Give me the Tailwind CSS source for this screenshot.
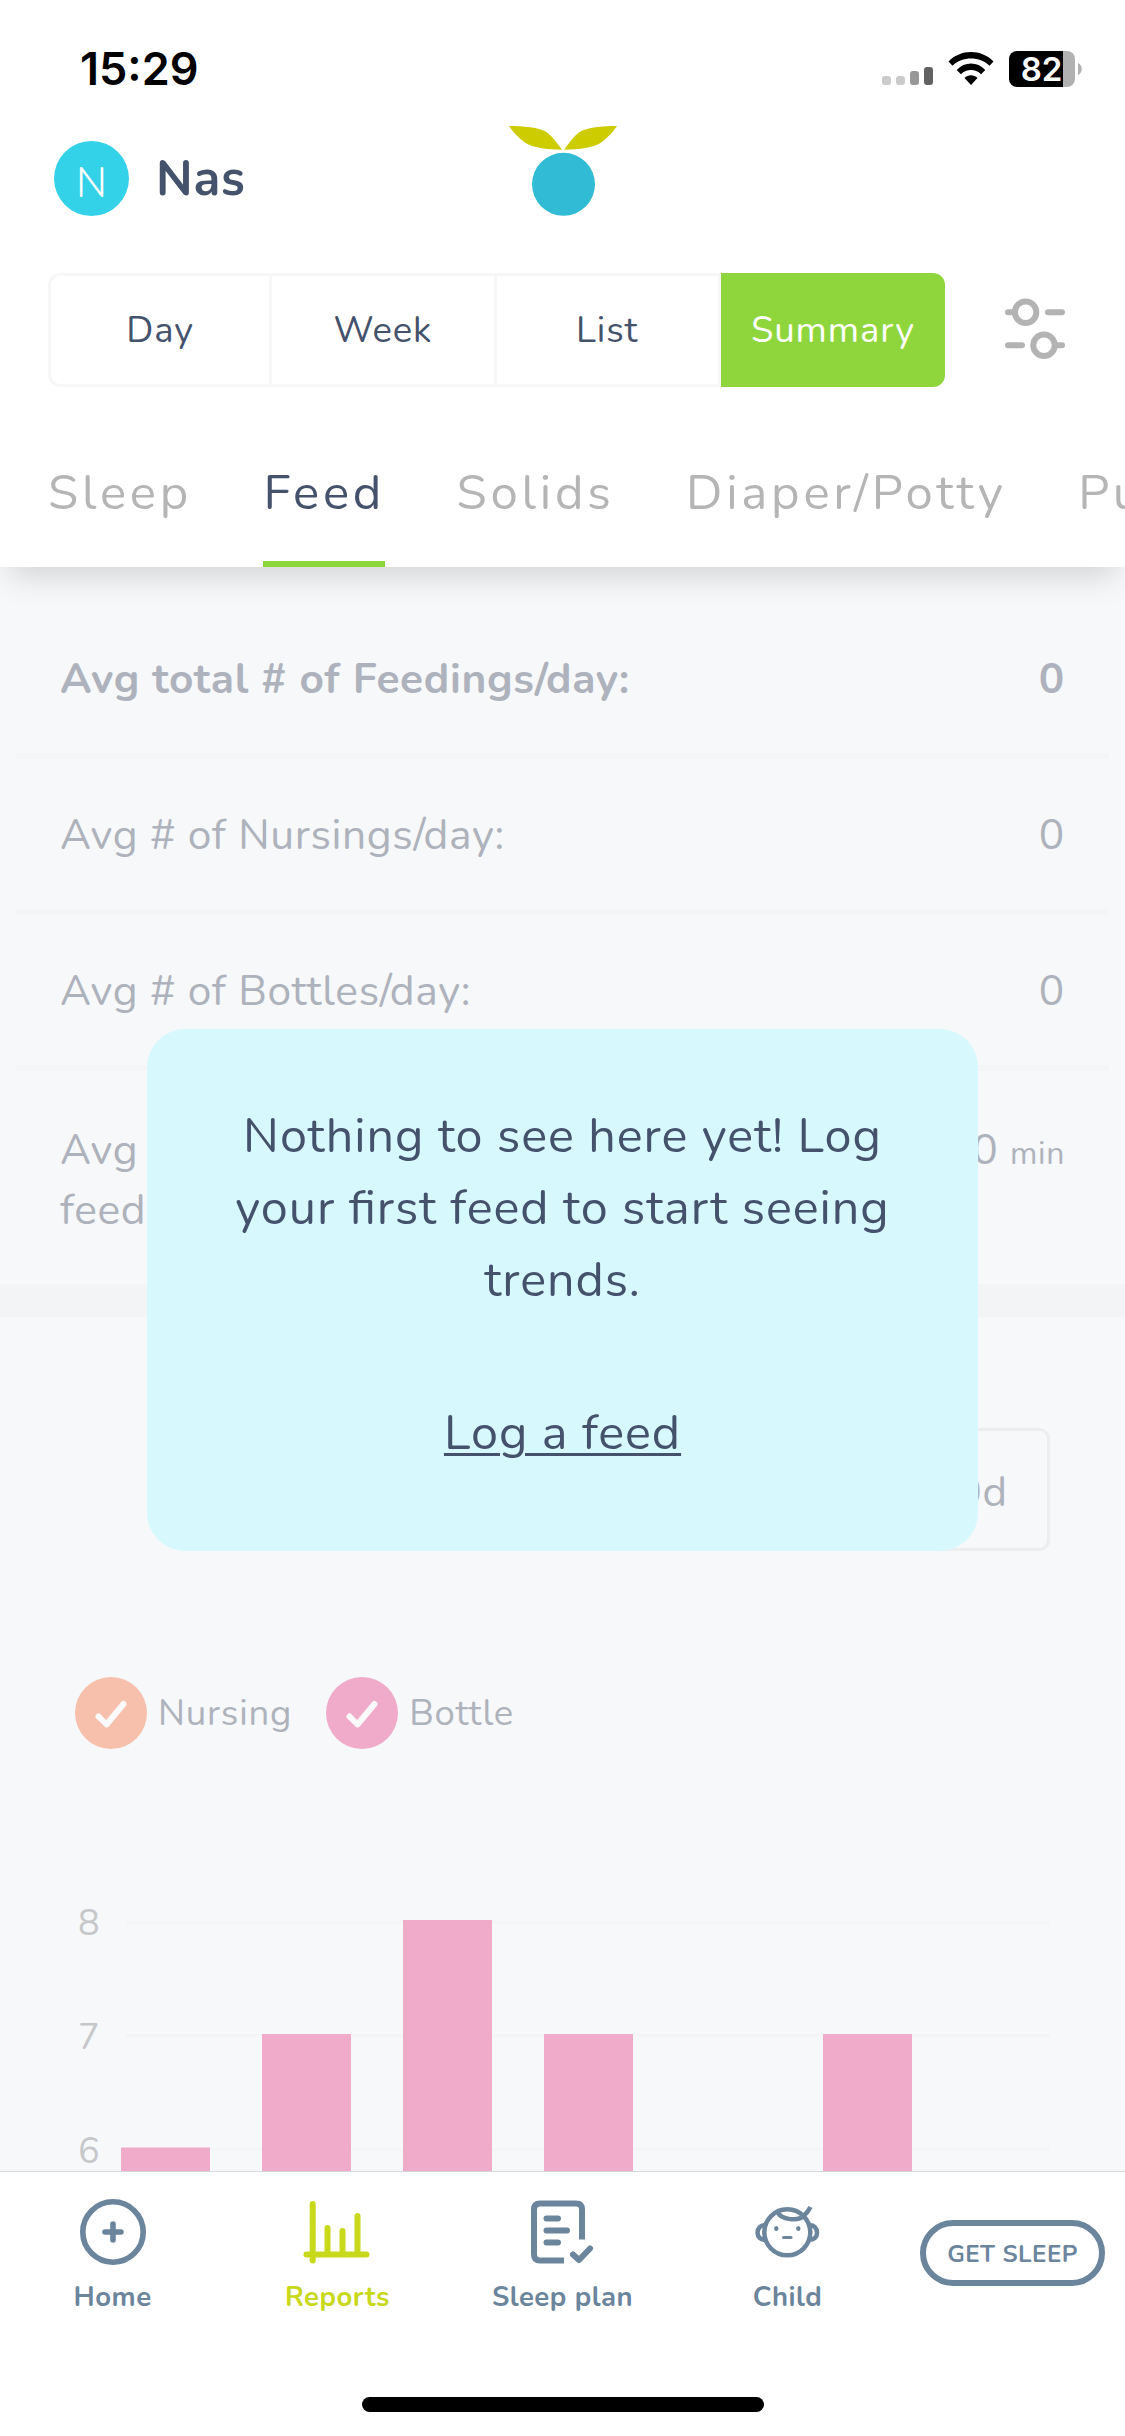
<!DOCTYPE html>
<html lang="en">
<head>
<meta charset="utf-8">
<title>Feed summary</title>
<script src="https://cdn.jsdelivr.net/npm/@tailwindcss/browser@4"></script>
</head>
<body class="bg-white">
<div class="relative flex h-[2436px] w-[1125px] flex-col overflow-hidden bg-white font-['Nunito','Noto_Sans',sans-serif] text-[#45526c]">

  <header class="relative z-10 flex h-[567px] shrink-0 flex-col bg-white shadow-[0_18px_30px_-9px_rgba(0,0,0,0.15)]">
    <!-- status bar -->
    <div class="flex h-[126px] items-start justify-between pt-[45px] pr-[42px] pl-[80px]">
      <span class="font-['Inter',sans-serif] text-[45px] leading-[48px] font-semibold text-black">15:29</span>
      <svg class="mt-[3px] h-[42px] w-[204px]" viewBox="879 48 204 42">
        <rect x="882" y="76" width="9" height="9" rx="3" fill="#cbcbcb"/>
        <rect x="896" y="76" width="9" height="9" rx="3" fill="#cbcbcb"/>
        <rect x="910" y="71" width="9" height="14" rx="3" fill="#979797"/>
        <rect x="924" y="67" width="9" height="18" rx="3" fill="#626262"/>
        <path d="M948.5 61.5C960.500 48.800 981.500 48.800 993.500 61.500L989.500 65.800C979.500 56.200 962.500 56.200 952.500 65.800ZM956.700 70C964.500 61.400 977.500 61.400 985.300 70L981 74.200C975.500 68.600 966.500 68.600 961 74.200ZM964.500 78C968 74.300 974 74.300 977.500 78L971 85Z" fill="#000"/>
        <path d="M1017 51H1063V87H1017A8 8 0 0 1 1009 79V59A8 8 0 0 1 1017 51Z" fill="#000"/>
        <path d="M1063 51H1067A8 8 0 0 1 1075 59V79A8 8 0 0 1 1067 87H1063Z" fill="#b1b1b1"/>
        <path d="M1078 63C1083 65 1083 73 1078 75Z" fill="#b1b1b1"/>
        <text x="1041.500" y="81" text-anchor="middle" font-family="Inter, sans-serif" font-weight="600" font-size="33" fill="#fff">82</text>
      </svg>
    </div>

    <!-- profile and logo -->
    <div class="grid h-[105px] grid-cols-3 items-center">
      <div class="flex items-center pl-[54px]">
        <span class="flex size-[75px] items-center justify-center rounded-full bg-[#34d2e9] pt-[10px] text-[42px] leading-none font-light text-white">N</span>
        <span class="ml-[27px] text-[49px] leading-[66px] font-bold tracking-[0.800px]">Nas</span>
      </div>
      <svg class="h-[92px] w-[110px] -translate-y-[8px] justify-self-center" viewBox="507.500 125 110 92">
        <path d="M508.500 126C523 126 539 127.500 546 132C552 136.500 557 143.500 561.500 149.800C546 149.500 532 147.500 525 143C518 138 512 131.500 508.500 126Z" fill="#cdcc00"/>
        <path d="M616.500 126C602 126 586 127.500 579 132C573 136.500 568 143.500 563.500 149.800C579 149.500 593 147.500 600 143C607 138 613 131.500 616.500 126Z" fill="#cdcc00"/>
        <circle cx="563" cy="184.300" r="31.500" fill="#31bbd5"/>
      </svg>
    </div>

    <!-- view switch -->
    <div class="mt-[42px] flex h-[114px] items-center">
      <div class="ml-[48px] grid h-full w-[897px] grid-cols-4 grid-rows-[114px] overflow-hidden rounded-[12px] text-center text-[36.500px] leading-[109px] tracking-[0.900px]">
        <span class="rounded-l-[12px] border-3 border-[#f7f7f7]">Day</span>
        <span class="border-y-3 border-r-3 border-[#f7f7f7]">Week</span>
        <span class="border-y-3 border-r-3 border-[#f7f7f7]">List</span>
        <span class="bg-[#8fd63d] pt-[3px] text-white">Summary</span>
      </div>
      <svg class="-mt-[2px] ml-[57px] h-[66px] w-[66px]" viewBox="1002 295 66 66" fill="none" stroke="#b3b3b3" stroke-width="6" stroke-linecap="round">
        <circle cx="1025.600" cy="311.300" r="10.700"/>
        <path d="M1008 311.300H1014M1048 311.300H1062"/>
        <circle cx="1044" cy="344.300" r="10.700"/>
        <path d="M1008 344.300H1022M1056 344.300H1062"/>
      </svg>
    </div>

    <!-- category tabs -->
    <nav class="flex h-[180px] gap-[71.300px] pl-[48px] text-[49px] leading-[66px] tracking-[3.800px] whitespace-nowrap text-[#b5b5b5]">
      <span class="pt-[73px]">Sleep</span>
      <span class="border-b-6 border-[#8fd63d] pt-[73px] text-[#45526c]">Feed</span>
      <span class="pt-[73px]">Solids</span>
      <span class="pt-[73px]">Diaper/Potty</span>
      <span class="pt-[73px]">Pu</span>
    </nav>
  </header>

  <main class="relative flex h-[1604px] shrink-0 flex-col overflow-hidden bg-[#f6f8fa] text-[#aeb2bc]">
    <!-- averages -->
    <dl class="mx-[16px] pt-[36px] text-[42.500px] leading-[60px] tracking-[0.650px]">
      <div class="flex h-[156px] items-center justify-between border-b-6 border-[#f3f5f7] px-[44px] pt-[2px] font-bold"><dt>Avg total # of Feedings/day:</dt><dd>0</dd></div>
      <div class="flex h-[156px] items-center justify-between border-b-6 border-[#f3f5f7] px-[44px] pt-[2px]"><dt>Avg # of Nursings/day:</dt><dd>0</dd></div>
      <div class="flex h-[156px] items-center justify-between border-b-6 border-[#f3f5f7] px-[44px] pt-[2px]"><dt>Avg # of Bottles/day:</dt><dd>0</dd></div>
      <div class="flex h-[213px] justify-between px-[44px] pt-[49px]"><dt>Avg<br>feed</dt><dd>0 <span class="text-[32px]">min</span></dd></div>
    </dl>
    <div class="h-[33px] shrink-0 bg-[#f2f4f5]"></div>

    <!-- range picker -->
    <div class="mt-[111px] mr-[75px] flex h-[123px] w-[260px] shrink-0 items-center justify-end self-end rounded-[11px] border-3 border-[#ebedef] pt-[6px] pr-[39px] text-[42px] tracking-[0.900px]">0d</div>

    <!-- legend -->
    <div class="mt-[126px] ml-[75px] flex h-[72px] shrink-0 items-center gap-[34px] text-[36.500px] tracking-[0.800px]">
      <div class="flex items-center gap-[11px]">
        <svg class="size-[72px]" viewBox="0 0 72 72"><circle cx="36" cy="36" r="36" fill="#f7c0ac"/><path d="M23.500 39.500L31.500 47.500L48.500 27" fill="none" stroke="#fbfafa" stroke-width="6" stroke-linecap="round" stroke-linejoin="round"/></svg>
        <span>Nursing</span>
      </div>
      <div class="flex items-center gap-[11px]">
        <svg class="size-[72px]" viewBox="0 0 72 72"><circle cx="36" cy="36" r="36" fill="#f1abca"/><path d="M23.500 39.500L31.500 47.500L48.500 27" fill="none" stroke="#fbfafa" stroke-width="6" stroke-linecap="round" stroke-linejoin="round"/></svg>
        <span>Bottle</span>
      </div>
    </div>

    <!-- feeds per day -->
    <svg class="h-[422px] w-[1125px] shrink-0" viewBox="0 1749 1125 422">
      <g fill="#f3f5f6">
        <rect x="126" y="1921" width="924" height="3"/>
        <rect x="126" y="2034" width="924" height="3"/>
        <rect x="126" y="2148" width="924" height="3"/>
      </g>
      <g fill="#c6c7c9" font-size="36">
        <text x="78" y="1935">8</text>
        <text x="78" y="2049">7</text>
        <text x="78" y="2163">6</text>
      </g>
      <g fill="#f1abca">
        <rect x="121" y="2147.500" width="89" height="24"/>
        <rect x="262" y="2034" width="89" height="137"/>
        <rect x="403" y="1920" width="89" height="251"/>
        <rect x="544" y="2034" width="89" height="137"/>
        <rect x="823" y="2034" width="89" height="137"/>
      </g>
    </svg>

    <!-- empty state message -->
    <div class="absolute top-[462px] left-[147px] flex h-[522px] w-[831px] flex-col items-center rounded-[38px] bg-[#d7f9fe] pt-[71px] text-center text-[48.500px] leading-[72px] tracking-[0.960px] text-[#45526c] [font-feature-settings:'liga']">
      <p>Nothing to see here yet! Log<br>your first feed to start seeing<br>trends.</p>
      <a class="mt-[81px] underline decoration-[3px] underline-offset-[4px]">Log a feed</a>
    </div>
  </main>

  <!-- tab bar -->
  <nav class="grid h-[226px] shrink-0 grid-cols-5 justify-items-center border-t-1 border-[#d5d8db] pt-[24px] text-[27.500px] leading-[36px] font-bold tracking-[0.500px] whitespace-nowrap text-[#6b859d]">
    <div class="flex flex-col items-center gap-[11px]">
      <svg class="size-[72px]" viewBox="76 2196 72 72" fill="none" stroke="currentColor" stroke-width="5.600" stroke-linecap="round"><circle cx="112" cy="2232" r="30.200"/><path d="M112 2224V2240M104 2232H120"/></svg>
      <span>Home</span>
    </div>
    <div class="flex flex-col items-center gap-[11px] text-[#c8d81b]">
      <svg class="size-[72px]" viewBox="301.500 2196 72 72" fill="none" stroke="currentColor" stroke-width="6" stroke-linecap="round"><path d="M313.200 2204V2260.500M307 2254.500H367M328 2228V2254M343 2231V2254M358 2216V2254"/></svg>
      <span>Reports</span>
    </div>
    <div class="flex flex-col items-center gap-[11px]">
      <svg class="size-[72px]" viewBox="527 2196 72 72" fill="none" stroke="currentColor" stroke-width="6"><path d="M564 2260.500H540Q534 2260.500 534 2254.500V2209.500Q534 2203.500 540 2203.500H576Q582 2203.500 582 2209.500V2239.500"/><path d="M546.500 2218.500H558M546.500 2230.500H567M546.500 2242.500H558M573 2254.500L579 2260L590 2248.500" stroke-linecap="round" stroke-linejoin="round"/></svg>
      <span>Sleep plan</span>
    </div>
    <div class="flex flex-col items-center gap-[11px]">
      <svg class="size-[72px]" viewBox="752 2196 72 72" fill="none" stroke="currentColor" stroke-width="4.500"><circle cx="787.300" cy="2232.300" r="23"/><path d="M766 2225.500C755 2223.500 754.500 2241.500 766 2239.500M808.600 2225.500C819.600 2223.500 820.100 2241.500 808.600 2239.500M777.500 2211.500C780.500 2220.500 799 2221.500 804 2215.500Q808 2212 810.500 2207"/><path d="M783.500 2237.500H791" stroke-width="3" stroke-linecap="round"/><ellipse cx="776.300" cy="2228.500" rx="2.200" ry="2.600" fill="currentColor" stroke="none"/><ellipse cx="798.300" cy="2228.500" rx="2.200" ry="2.600" fill="currentColor" stroke="none"/></svg>
      <span>Child</span>
    </div>
    <div class="mt-[24px] flex h-[66px] w-[185px] items-center justify-center rounded-full border-6 border-[#6b859d] pt-[1px] text-[24px] tracking-[0.500px]">GET SLEEP</div>
  </nav>
  <div class="ml-[362px] h-[15px] w-[402px] rounded-full bg-black"></div>
</div>
</body>
</html>
